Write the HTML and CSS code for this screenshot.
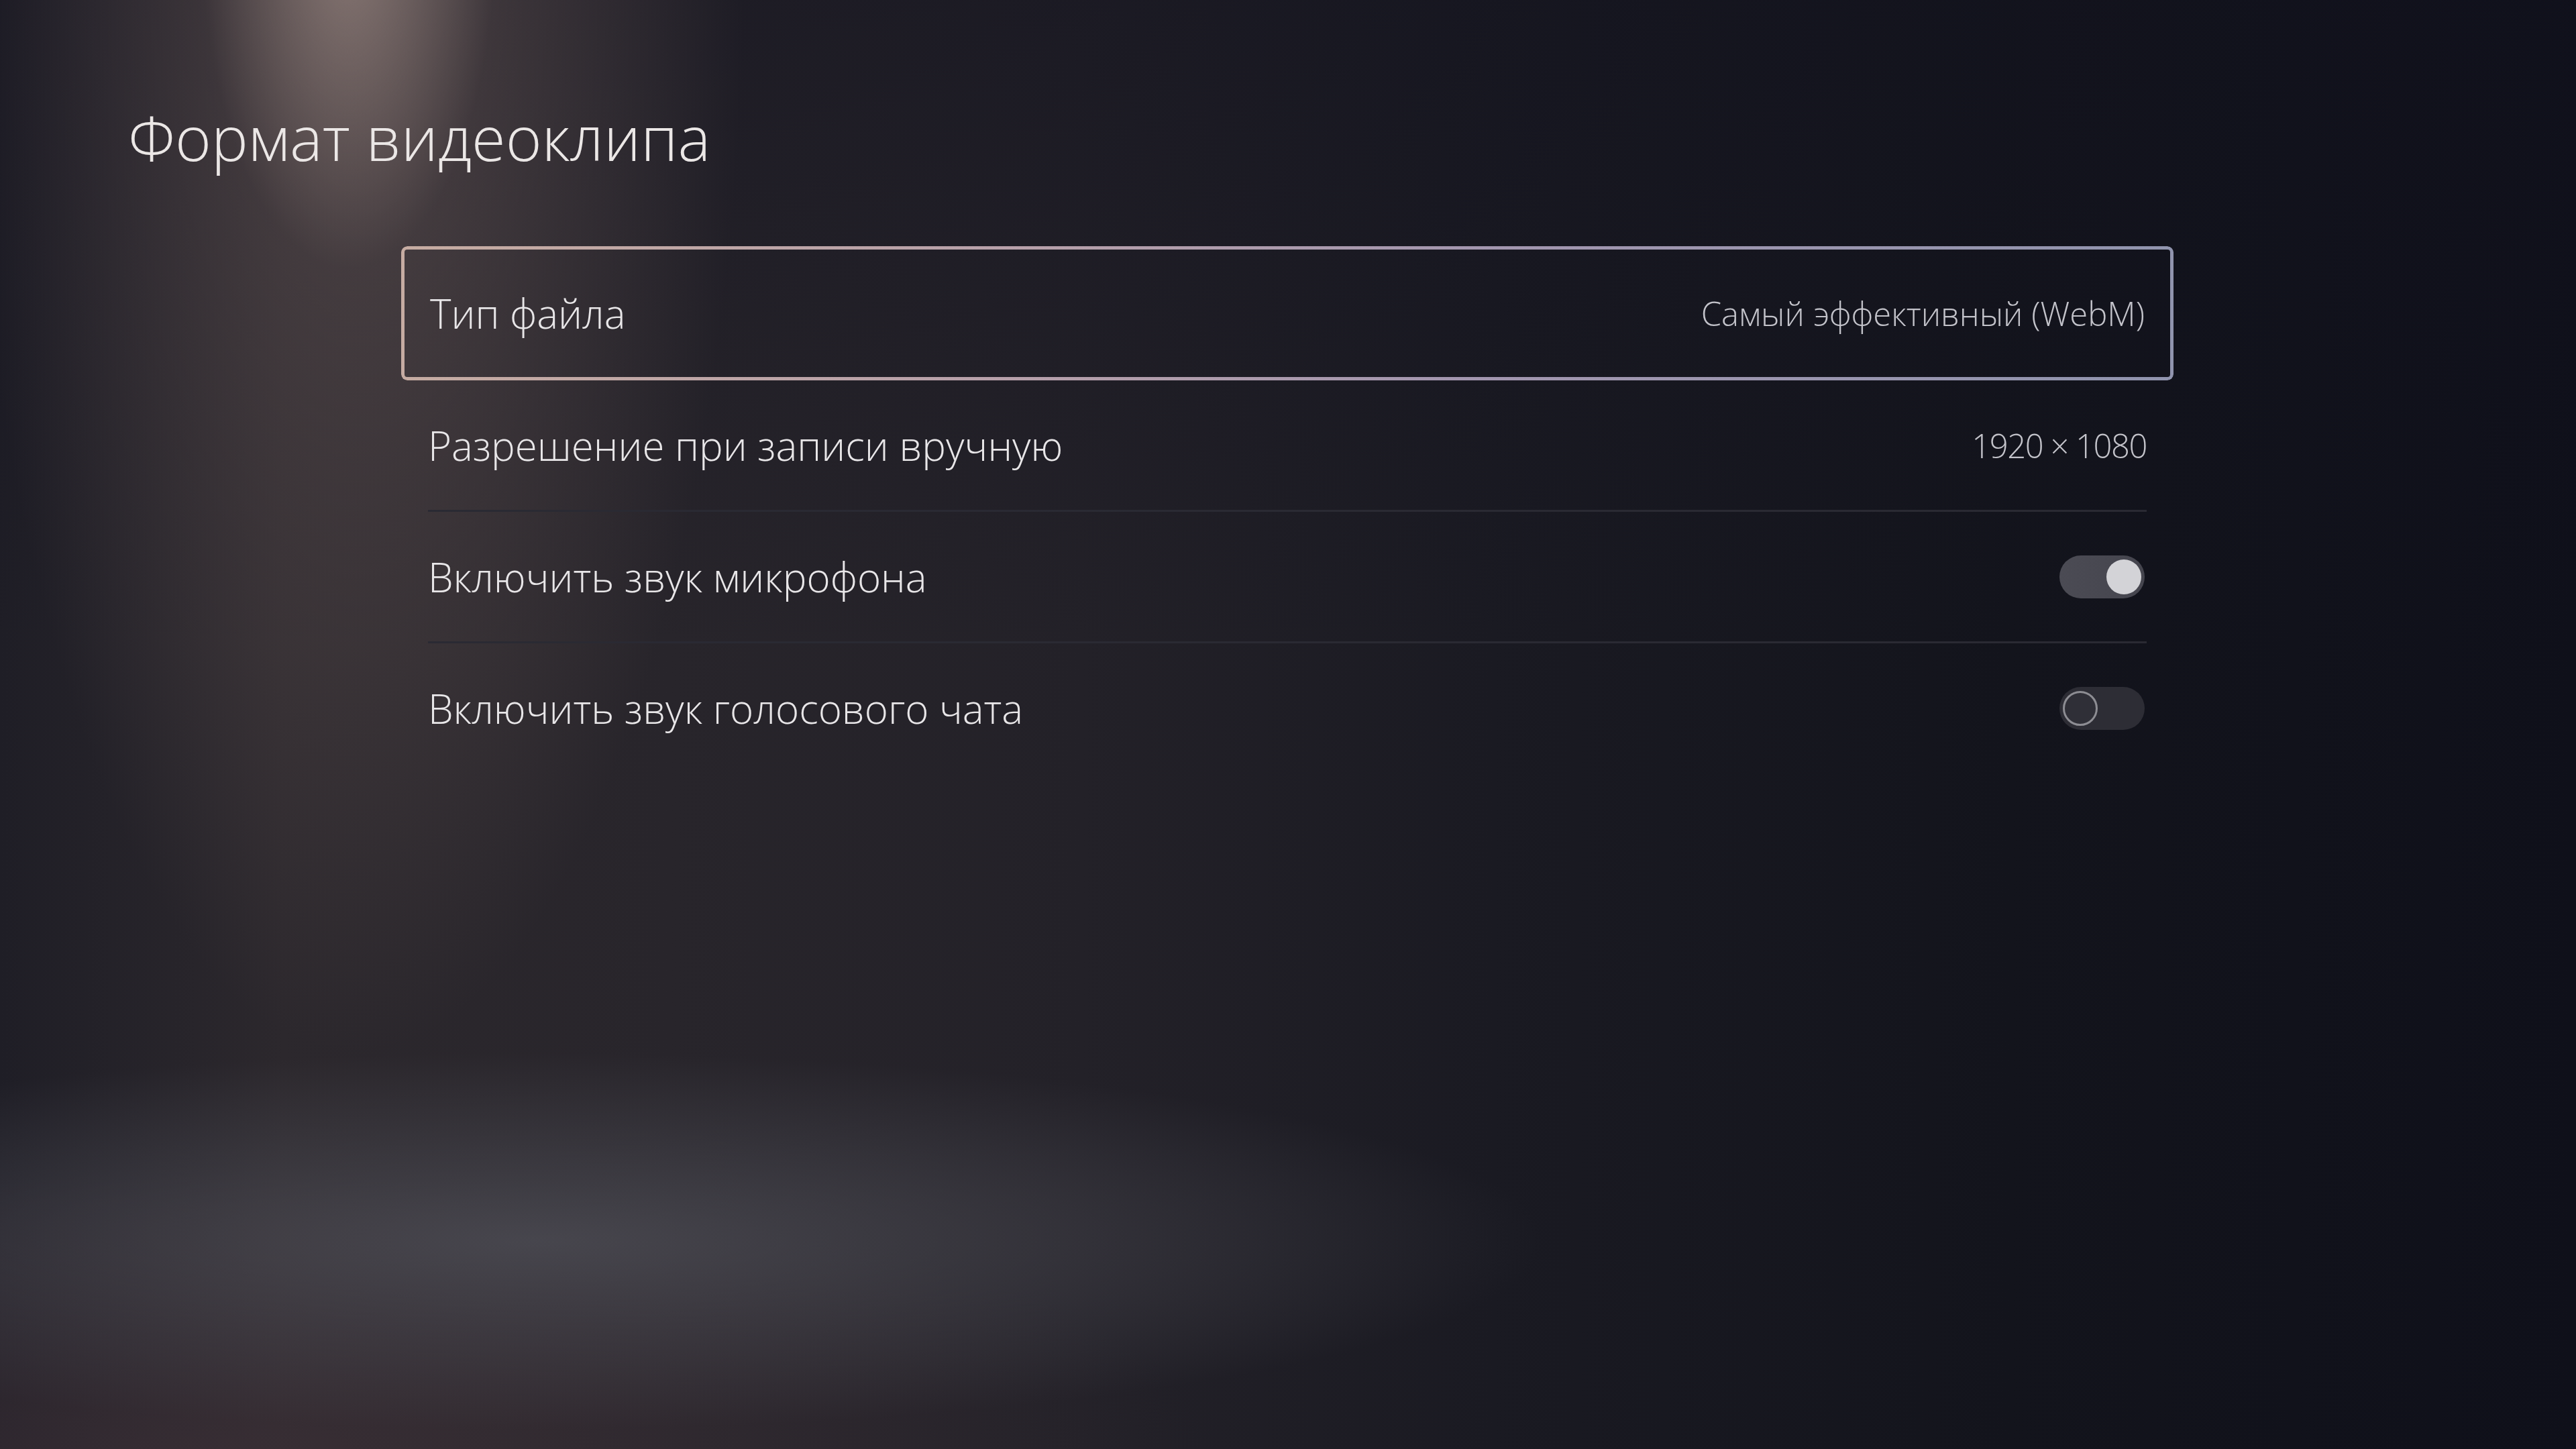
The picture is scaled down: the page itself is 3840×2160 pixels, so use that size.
FILE: index.html
```html
<!DOCTYPE html>
<html lang="ru">
<head>
<meta charset="utf-8">
<title>Формат видеоклипа</title>
<link rel="stylesheet" href="styles.css">
</head>
<body>
<div class="screen">
  <h1 class="title">Формат видеоклипа</h1>
  <div class="list">
    <div class="row focused">
      <span class="label">Тип файла</span>
      <span class="value">Самый эффективный (WebM)</span>
    </div>
    <div class="row first">
      <div class="row-inner">
        <span class="label">Разрешение при записи вручную</span>
        <span class="value num">1920 × 1080</span>
      </div>
    </div>
    <div class="row">
      <div class="row-inner sep">
        <span class="label">Включить звук микрофона</span>
        <span class="toggle on"><span class="knob"></span></span>
      </div>
    </div>
    <div class="row">
      <div class="row-inner sep">
        <span class="label">Включить звук голосового чата</span>
        <span class="toggle off"><span class="knob"></span></span>
      </div>
    </div>
  </div>
</div>
</body>
</html>
```
FILE: styles.css
```css
html, body {
  margin: 0;
  padding: 0;
  width: 3840px;
  height: 2160px;
  overflow: hidden;
}

body {
  font-family: "Open Sans", "Noto Sans", "Liberation Sans", sans-serif;
  font-weight: 300;
  color: #e7e5e6;
  background:
    radial-gradient(ellipse 220px 500px at 520px -100px, rgba(160,141,135,0.7), rgba(160,141,135,0) 100%),
    radial-gradient(ellipse 580px 1650px at 530px -80px, rgba(112,96,94,0.58), rgba(112,96,94,0) 100%),
    radial-gradient(ellipse 1500px 280px at 800px 1850px, rgba(80,80,88,0.75), rgba(80,80,88,0) 100%),
    radial-gradient(ellipse 1500px 420px at 300px 2170px, rgba(64,50,57,0.6), rgba(64,50,57,0) 100%),
    linear-gradient(180deg, rgba(18,18,30,0.45) 0%, rgba(18,18,30,0) 45%),
    linear-gradient(90deg, #1f1e26 0%, #2c282d 11%, #28252b 26%, #232128 42%, #1a1a22 58%, #13141c 78%, #0f101a 100%);
}

.screen {
  width: 3840px;
  height: 2160px;
  box-sizing: border-box;
  padding-top: 159px;
}

.title {
  margin: 0 0 0 191px;
  font-size: 92px;
  line-height: 92px;
  font-weight: 300;
  color: #ebe7e6;
}

.list {
  margin: 116px 0 0 598px;
  width: 2642px;
  display: flex;
  flex-direction: column;
}

.row {
  height: 196px;
  box-sizing: border-box;
  padding: 0 40px 0 40px;
  display: flex;
}

.row.first {
  height: 193px;
}

.row-inner {
  flex: 1;
  display: flex;
  align-items: center;
  justify-content: space-between;
}

.row-inner.sep {
  border-top: 3px solid #2a2a33;
}

.row.focused {
  position: relative;
  height: 200px;
  padding: 0 43px 0 43px;
  align-items: center;
  justify-content: space-between;
  border-radius: 9px;
}

.row.focused::before {
  content: "";
  position: absolute;
  inset: 0;
  border-radius: 9px;
  padding: 5px;
  background: linear-gradient(100deg, #c6aca2 0%, #b7a0aa 35%, #a396af 60%, #9094ae 100%);
  -webkit-mask: linear-gradient(#000 0 0) content-box, linear-gradient(#000 0 0);
  -webkit-mask-composite: xor;
  mask: linear-gradient(#000 0 0) content-box exclude, linear-gradient(#000 0 0);
}

.label {
  font-size: 60px;
  color: #e8e6e8;
}

.value {
  font-size: 49px;
  color: #c3c3ca;
}

.value.num {
  letter-spacing: -1.5px;
}

.toggle {
  width: 127px;
  height: 64px;
  border-radius: 32px;
  box-sizing: border-box;
  display: flex;
  align-items: center;
  padding: 0 5px;
  margin-right: 3px;
}

.toggle.on {
  background: linear-gradient(90deg, #4b4b54, #45454e);
  justify-content: flex-end;
}

.toggle.on .knob {
  width: 52px;
  height: 52px;
  border-radius: 50%;
  background: #d3d3d7;
}

.toggle.off {
  background: #2d2d35;
  justify-content: flex-start;
}

.toggle.off .knob {
  width: 52px;
  height: 52px;
  border-radius: 50%;
  box-sizing: border-box;
  border: 3px solid #8d8d93;
  background: #2f2f37;
}
```
